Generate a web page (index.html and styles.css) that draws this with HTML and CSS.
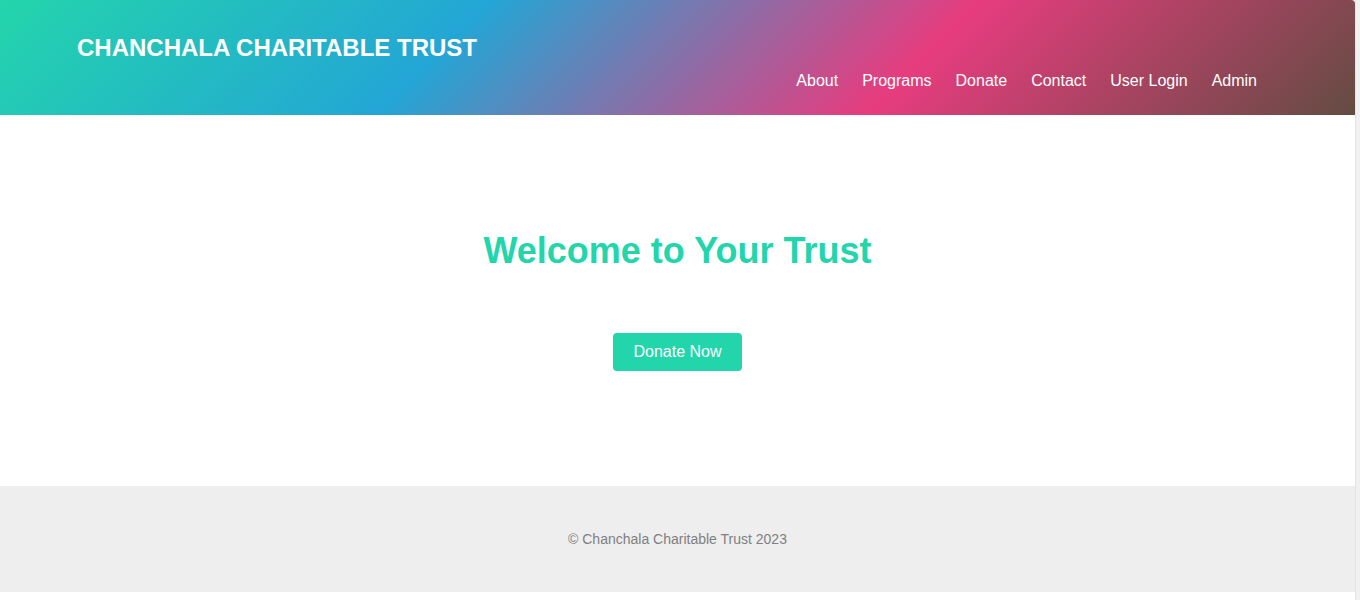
FILE: index.html
```html
<!DOCTYPE html>
<html lang="en">
<head>
<meta charset="utf-8">
<title>Chanchala Charitable Trust</title>
<link rel="stylesheet" href="styles.css">
</head>
<body>
<div class="page">
  <header class="site-header">
    <h1 class="brand">CHANCHALA CHARITABLE TRUST</h1>
    <nav class="nav">
      <a href="#">About</a>
      <a href="#">Programs</a>
      <a href="#">Donate</a>
      <a href="#">Contact</a>
      <a href="#">User Login</a>
      <a href="#">Admin</a>
    </nav>
  </header>
  <main class="hero">
    <h2 class="hero-title">Welcome to Your Trust</h2>
    <a href="#" class="btn">Donate Now</a>
  </main>
  <footer class="site-footer">
    <p>&copy; Chanchala Charitable Trust 2023</p>
  </footer>
</div>
<div class="scrollbar"></div>
</body>
</html>
```
FILE: styles.css
```css
* { box-sizing: border-box; }
html, body { margin: 0; padding: 0; }
body {
  display: flex;
  min-height: 100vh;
  background: #fff;
  font-family: "Liberation Sans", Arial, sans-serif;
}
.page { flex: 1; min-width: 0; }
.scrollbar {
  width: 5px;
  flex: none;
  background: #f1f1f1;
  border-left: 1px solid #e4e4e4;
}
.site-header {
  display: flex;
  flex-direction: column;
  padding: 34px 98px 25px 77px;
  background: linear-gradient(135deg, #23d5ab 0%, #23a6d5 33.3%, #e73c7e 66.6%, #634c42 100%);
  border-top-right-radius: 4px;
  height: 115px;
}
.brand {
  margin: 0;
  font-size: 24px;
  line-height: 27px;
  font-weight: bold;
  color: #fff;
}
.nav {
  align-self: flex-end;
  display: flex;
  gap: 24px;
  margin-top: 11px;
}
.nav a {
  color: #fff;
  text-decoration: none;
  font-size: 16px;
  line-height: 18px;
}
.hero {
  padding: 115px 0;
  text-align: center;
}
.hero-title {
  margin: 0 0 62px;
  font-size: 36px;
  line-height: 41px;
  font-weight: bold;
  color: #23d5ab;
}
.btn {
  display: inline-block;
  padding: 10px 20px;
  font-size: 16px;
  line-height: 18px;
  color: #fff;
  background: #23d5ab;
  border-radius: 4px;
  text-decoration: none;
}
.site-footer {
  background: #eee;
  padding: 45px 0;
  text-align: center;
}
.site-footer p {
  margin: 0;
  font-size: 14px;
  line-height: 16px;
  color: #808080;
}
```
